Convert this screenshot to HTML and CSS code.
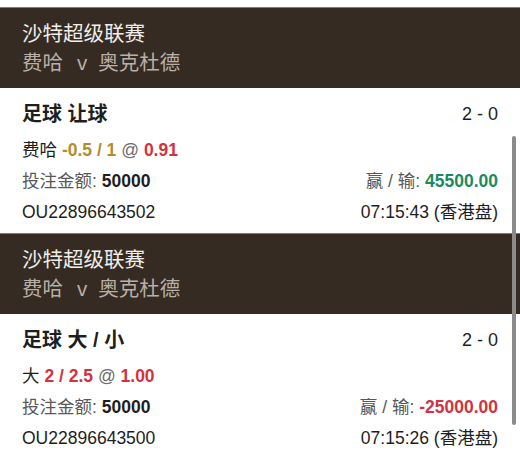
FILE: index.html
```html
<!DOCTYPE html>
<html lang="zh">
<head>
<meta charset="utf-8">
<link rel="stylesheet" href="styles.css">
</head>
<body>
<div class="page">
  <section class="bet">
    <header class="match">
      <div class="league">沙特超级联赛</div>
      <div class="teams">费哈<span class="vs">v</span>奥克杜德</div>
    </header>
    <div class="card">
      <div class="row title"><span>足球 让球</span><span class="score">2 - 0</span></div>
      <div class="row"><span>费哈 <b class="gold">-0.5 / 1</b> <span class="at">@</span> <b class="red">0.91</b></span></div>
      <div class="row"><span><span class="label">投注金额:</span> <b>50000</b></span><span><span class="label">赢 / 输:</span> <b class="green">45500.00</b></span></div>
      <div class="row"><span>OU22896643502</span><span>07:15:43 (香港盘)</span></div>
    </div>
  </section>
  <section class="bet">
    <header class="match">
      <div class="league">沙特超级联赛</div>
      <div class="teams">费哈<span class="vs">v</span>奥克杜德</div>
    </header>
    <div class="card">
      <div class="row title"><span>足球 大 / 小</span><span class="score">2 - 0</span></div>
      <div class="row"><span>大 <b class="red">2 / 2.5</b> <span class="at">@</span> <b class="red">1.00</b></span></div>
      <div class="row"><span><span class="label">投注金额:</span> <b>50000</b></span><span><span class="label">赢 / 输:</span> <b class="red">-25000.00</b></span></div>
      <div class="row"><span>OU22896643500</span><span>07:15:26 (香港盘)</span></div>
    </div>
  </section>
  <div class="scrollbar"></div>
</div>
</body>
</html>
```
FILE: styles.css
```css
html, body {
  margin: 0;
  padding: 0;
  background: #ffffff;
}
body {
  font-family: "Liberation Sans", Arial, "Noto Sans CJK SC", sans-serif;
  color: #1e1e1e;
}
.page {
  position: relative;
  padding-top: 7px;
  height: 445px;
  overflow: hidden;
}
.match {
  background: #362b22;
  border-top: 1px solid #857a70;
  padding: 11px 22px 10px;
  height: 59px;
}
.league {
  font-size: 20.5px;
  line-height: 29px;
  color: #f1ede9;
}
.teams {
  font-size: 20.5px;
  line-height: 29px;
  color: #b8afa6;
}
.vs {
  margin: 0 11px 0 14px;
}
.card {
  padding: 11px 22px 5px;
  height: 129px;
}
.row {
  display: flex;
  justify-content: space-between;
  font-size: 17.5px;
  line-height: 31px;
}
.row.title {
  font-size: 20px;
  line-height: 30px;
  font-weight: bold;
  margin-bottom: 6px;
}
.row.title .score {
  font-weight: normal;
  font-size: 18px;
}
.row b {
  font-weight: bold;
}
.label {
  color: #585858;
}
.at {
  color: #6b6b6b;
}
.gold {
  color: #b38d2d;
}
.red {
  color: #d3323e;
}
.green {
  color: #1c8a5d;
}
.scrollbar {
  position: absolute;
  left: 512px;
  top: 136px;
  width: 4px;
  height: 289px;
  border-radius: 2px;
  background: #8b8b8b;
}
```
